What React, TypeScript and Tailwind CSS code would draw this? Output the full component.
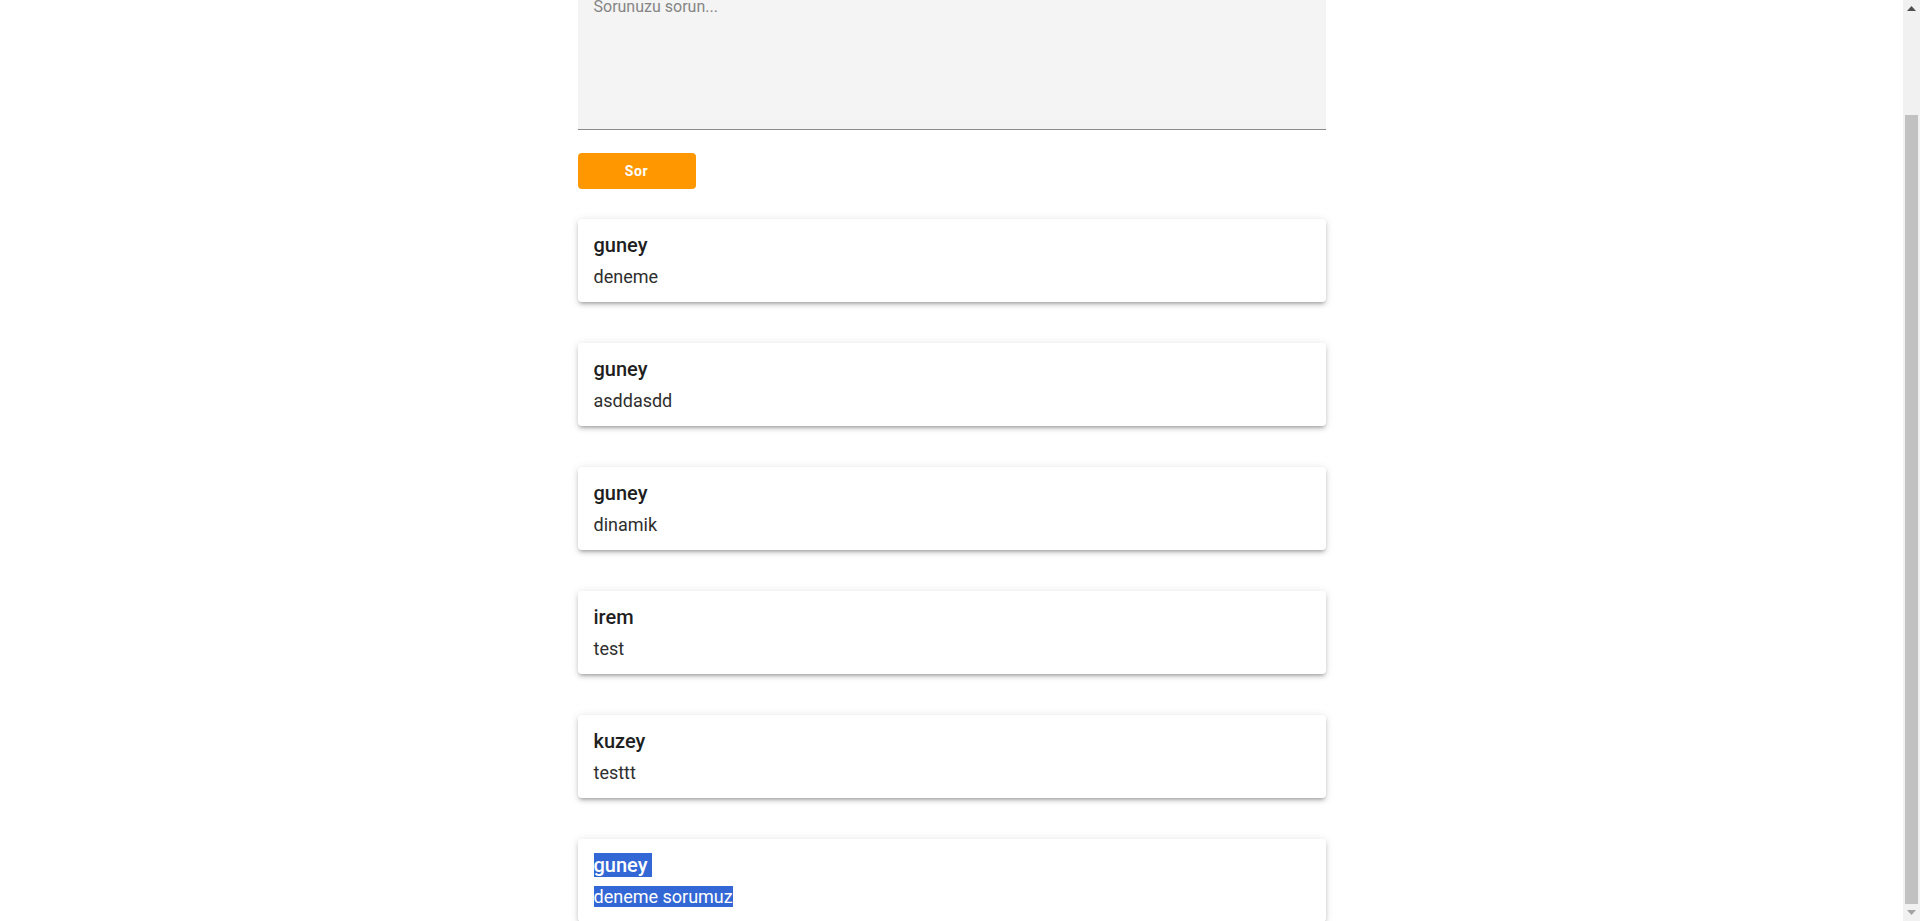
import { useEffect, useLayoutEffect, useState } from "react";

type Question = {
	id: number;
	user: string;
	text: string;
	selected?: boolean;
};

const QUESTIONS: Question[] = [
	{ id: 1, user: "guney", text: "deneme" },
	{ id: 2, user: "guney", text: "asddasdd" },
	{ id: 3, user: "guney", text: "dinamik" },
	{ id: 4, user: "irem", text: "test" },
	{ id: 5, user: "kuzey", text: "testtt" },
	{ id: 6, user: "guney", text: "deneme sorumuz", selected: true },
];

function QuestionCard({ q }: { q: Question }) {
	return (
		<div className="bg-white rounded-[4px] px-4 pt-[12px] pb-[14px] shadow-[0px_3px_3px_-2px_rgba(0,0,0,0.2),0px_3px_4px_0px_rgba(0,0,0,0.14),0px_1px_8px_0px_rgba(0,0,0,0.12)]">
			<div className="text-[20px] leading-[28px] font-medium text-[#1f1f1f]">
				{q.selected ? <span className="bg-[#3367d6] text-white">{q.user + "\u00a0"}</span> : q.user}
			</div>
			<div className="mt-[7px] text-[18px] leading-[22px] text-[#2e2e2e]">
				{q.selected ? <span className="bg-[#3367d6] text-white">{q.text}</span> : q.text}
			</div>
		</div>
	);
}

// classic window scrollbar, drawn since the screenshot hides the real one
function FakeScrollbar() {
	return (
		<div className="fixed top-0 right-0 w-[17px] h-screen bg-[#f1f1f1] flex flex-col items-center">
			<div className="h-[17px] w-full flex items-center justify-center">
				<svg width="9" height="5" viewBox="0 0 9 5">
					<path d="M4.5 0 L9 5 L0 5 Z" fill="#505050" />
				</svg>
			</div>
			<div className="flex-1 w-full flex flex-col px-[2px] pt-[98px]">
				<div className="flex-1 bg-[#c1c1c1]" />
			</div>
			<div className="h-[17px] w-full flex items-center justify-center">
				<svg width="9" height="5" viewBox="0 0 9 5">
					<path d="M0 0 L9 0 L4.5 5 Z" fill="#a3a3a3" />
				</svg>
			</div>
		</div>
	);
}

export default function App() {
	const [draft, setDraft] = useState("");

	// the page is looked at scrolled down to the end of the list
	useLayoutEffect(() => {
		window.scrollTo(0, 117);
	}, []);
	useEffect(() => {
		window.scrollTo(0, 117);
	}, []);

	return (
		<div className="bg-white pr-[17px] font-['Roboto','Liberation_Sans',sans-serif]">
			<div className="w-[748px] mx-auto pt-[87px]">
				<textarea
					className="block w-full h-[160px] resize-none bg-[#f4f4f4] border-b border-[#8a8a8a] px-4 pt-[25px] pb-2 text-[16px] leading-[24px] text-[#212121] outline-none placeholder:text-[#858585]"
					placeholder="Sorunuzu sorun..."
					value={draft}
					onChange={(e) => setDraft(e.target.value)}
				/>

				<button className="mt-[23px] h-[36px] w-[118px] rounded-[4px] bg-[#ff9800] text-white text-[14px] font-bold tracking-[0.04em]">
					Sor
				</button>

				<div className="mt-[30px] flex flex-col gap-[41px]">
					{QUESTIONS.map((q) => (
						<QuestionCard key={q.id} q={q} />
					))}
				</div>
			</div>
			<FakeScrollbar />
		</div>
	);
}
